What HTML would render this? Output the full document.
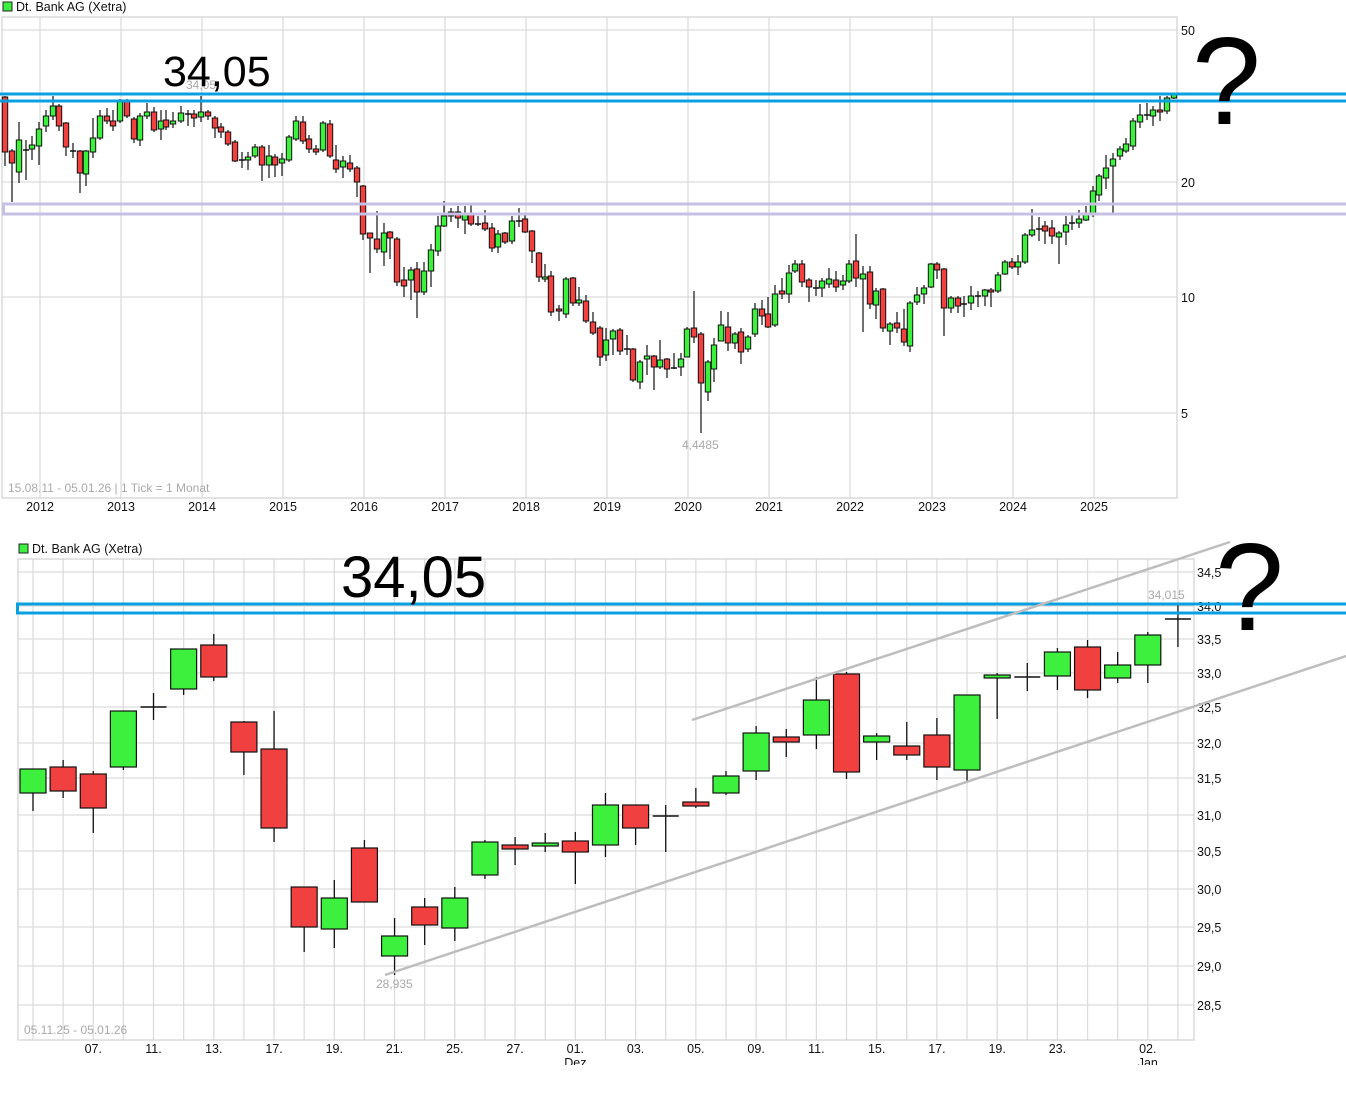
<!DOCTYPE html>
<html><head><meta charset="utf-8"><style>
html,body{margin:0;padding:0;background:#fff;width:1346px;height:1094px;overflow:hidden}
svg{position:absolute;left:0;top:0}
text{font-family:"Liberation Sans",sans-serif}
</style></head><body>
<svg id="s" width="1346" height="1094" xmlns="http://www.w3.org/2000/svg">
<defs><clipPath id="cb"><rect x="0" y="0" width="1346" height="1065"/></clipPath></defs>
<g id="grid"></g>
<g id="c1"></g>
<g id="c2"></g>
<g id="ov"></g>
</svg>
<script>
var NS="http://www.w3.org/2000/svg";
function el(p,t,a,txt){var e=document.createElementNS(NS,t);for(var k in a)e.setAttribute(k,a[k]);if(txt!=null)e.textContent=txt;document.getElementById(p).appendChild(e);return e;}
var G="#dcdcdc";
[30,182,297,413].forEach(function(y){el("grid","line",{x1:2,x2:1177,y1:y,y2:y,stroke:G,"stroke-width":1.3});});
var yrs=[40,121,202,283,364,445,526,607,688,769,850,932,1013,1094];
yrs.forEach(function(x,i){el("grid","line",{x1:x,x2:x,y1:17,y2:498,stroke:G,"stroke-width":1.3});
 el("grid","text",{x:x,y:511,"font-size":12.5,"text-anchor":"middle",fill:"#111"},String(2012+i));});
el("grid","rect",{x:2,y:17,width:1175,height:481,fill:"none",stroke:"#d4d4d4","stroke-width":1.3});
el("grid","text",{x:1181,y:35,"font-size":12.5,fill:"#111"},"50");
el("grid","text",{x:1181,y:187,"font-size":12.5,fill:"#111"},"20");
el("grid","text",{x:1181,y:302,"font-size":12.5,fill:"#111"},"10");
el("grid","text",{x:1181,y:418,"font-size":12.5,fill:"#111"},"5");
el("grid","rect",{x:3,y:2,width:9,height:9,fill:"#3ef03e",stroke:"#222","stroke-width":1});
el("grid","text",{x:16,y:11,"font-size":12.5,fill:"#111"},"Dt. Bank AG (Xetra)");
el("grid","text",{x:8,y:492,"font-size":12,fill:"#a9a9a9"},"15.08.11 - 05.01.26  | 1 Tick = 1 Monat");
el("grid","text",{x:682,y:449,"font-size":12,fill:"#a9a9a9"},"4,4485");
el("grid","text",{x:186,y:89,"font-size":12,fill:"#a9a9a9"},"34,05");
var T=[[5,97,152,0,96,166],[12,151,163,0,149,202],[19,140,172,1,122,183],[26,150,150,2,140,180],[32,145,149,1,136,160],[39,129,146,1,122,165],[46,116,126,1,110,132],[53,106,116,1,96,120],[59,106,126,0,104,131],[66,123,147,0,122,156],[73,151,151,2,143,158],[80,151,173,0,150,193],[86,151,174,1,150,186],[93,138,152,1,118,158],[100,116,138,1,110,140],[107,116,121,0,108,124],[113,121,126,0,110,131],[120,102,121,1,99,123],[127,102,116,0,99,118],[134,119,139,0,117,143],[140,116,140,1,113,146],[147,112,116,1,103,119],[154,112,130,0,107,132],[161,121,129,1,110,140],[166,120,127,0,110,130],[173,121,124,1,112,128],[181,113,121,1,106,123],[188,114,114,2,110,126],[194,114,118,0,110,127],[201,112,117,1,96,122],[208,112,116,0,110,120],[215,118,128,0,116,138],[221,127,132,0,123,138],[228,132,144,0,130,146],[235,142,161,0,140,162],[242,160,160,2,152,168],[248,157,160,1,152,170],[255,147,156,1,144,158],[262,147,165,0,145,181],[269,156,165,1,145,178],[275,157,165,0,154,177],[282,159,163,1,153,176],[289,137,160,1,135,162],[296,121,139,1,116,141],[303,122,141,0,116,144],[309,139,149,0,135,153],[316,149,152,0,145,155],[323,123,150,1,121,152],[330,124,156,0,120,158],[336,160,169,0,145,173],[343,161,167,1,156,178],[350,163,169,0,155,172],[357,168,182,0,166,197],
[363,186,234,0,185,240],[370,233,238,0,233,273],[377,239,249,0,211,253],[384,233,252,1,223,266],[390,232,238,0,231,259],[397,239,282,0,237,286],[404,280,286,0,267,297],[411,270,280,1,267,300],[417,269,292,0,262,318],[424,271,292,1,262,295],[431,250,271,1,244,287],[438,226,251,1,216,256],[444,216,226,1,201,227],[451,212,216,1,208,222],[458,212,218,0,206,228],[465,213,220,1,206,234],[471,213,224,0,205,226],[478,224,224,2,216,226],[485,223,229,0,210,231],[492,228,248,0,223,252],[498,234,247,1,230,253],[505,233,242,0,232,244],[512,221,241,1,216,244],[519,221,221,2,208,227],[525,219,232,0,214,233],[532,231,251,0,230,263],[539,253,277,0,252,282],[545,277,279,1,264,282],[551,276,312,0,271,316],[559,309,311,0,305,321],[566,279,314,1,277,318],[573,278,303,0,277,306],[579,300,303,1,287,306],[586,301,321,0,295,323],[593,322,333,0,312,335],[600,328,357,0,326,366],[606,340,355,1,328,361],[613,331,339,1,329,355],[620,330,351,0,328,355],[627,349,349,2,335,355],[633,349,380,0,348,382],[640,362,382,1,360,389],[647,356,359,1,345,375],[654,356,367,0,355,390],[660,360,367,1,340,369],[667,359,369,0,358,378],[674,368,368,2,353,369],[681,359,367,1,353,376],[687,329,357,1,327,357],[694,328,337,0,291,343],[701,334,383,0,332,433],[708,362,392,1,360,401],[714,345,369,1,338,382],[721,325,341,1,311,341],[728,327,343,0,312,351],[735,334,343,1,332,349],[741,332,352,0,328,364],[748,337,349,1,335,352],[755,309,334,1,303,337],[762,309,316,0,300,325],[768,314,327,0,297,328],[775,294,325,1,285,327],[782,291,294,0,278,299],[789,273,294,1,265,303],[795,264,271,1,260,273],[802,264,282,0,260,287],[809,280,287,0,278,302],[816,288,288,2,280,296],[822,281,288,1,278,297],[829,279,284,1,268,288],[836,280,287,0,271,292],[843,281,285,1,275,290],[849,264,281,1,260,283],[856,261,278,0,234,287],[863,274,279,1,266,332],[870,272,304,0,266,309],[876,291,305,1,288,319],[883,289,328,0,288,332],[890,324,331,1,322,345],[897,323,328,0,312,333],[904,329,342,0,309,346],[910,303,346,1,301,352],[917,295,302,1,287,305],[924,288,294,1,285,304],[931,264,287,1,263,288],[937,264,270,0,262,279],[944,269,308,0,268,336],[951,298,308,1,296,313],[958,298,306,0,296,313],[964,304,304,2,296,317],[971,296,303,1,286,310],[978,296,296,2,291,307],[985,290,296,1,289,306],[991,290,292,0,288,307],[998,275,291,1,272,293],[1005,262,274,1,260,275],[1012,262,267,0,258,269],[1018,262,267,1,255,275],[1025,235,262,1,233,264],[1032,230,235,1,209,237],[1039,229,229,2,217,241],[1045,226,231,0,221,244],[1052,228,236,0,220,244],[1059,233,237,1,231,264],[1066,225,232,1,216,245],[1072,223,223,2,214,230],[1079,219,223,1,210,228],[1086,214,220,1,206,221],[1093,191,213,1,186,217],[1099,176,195,1,174,201],[1106,168,178,1,155,189],[1113,159,166,1,153,213],[1120,149,156,1,146,160],[1126,144,151,1,138,153],[1133,121,146,1,118,150],[1140,115,122,1,104,128],[1147,115,115,2,103,120],[1153,110,116,1,106,126],[1160,110,112,0,96,121],[1167,98,111,1,96,114],[1174,95,98,1,94,99]];
T.forEach(function(c){
 el("c1","line",{x1:c[0],x2:c[0],y1:c[4],y2:c[5],stroke:"#111","stroke-width":1.2});
 if(c[3]==2){el("c1","line",{x1:c[0]-3,x2:c[0]+3,y1:c[1],y2:c[1],stroke:"#111","stroke-width":1.5});}
 else el("c1","rect",{x:c[0]-2.7,y:c[1],width:5.4,height:Math.max(2,c[2]-c[1]),fill:c[3]?"#3ef03e":"#f04040",stroke:"#111","stroke-width":1});
});
var L=18,R=1194,TOP=559,BOT=1040;
var lv=[["34,5",572],["34,0",606],["33,5",639],["33,0",673],["32,5",707],["32,0",743],["31,5",778],["31,0",815],["30,5",851],["30,0",889],["29,5",927],["29,0",966],["28,5",1005]];
lv.forEach(function(l){el("grid","line",{x1:L,x2:R,y1:l[1],y2:l[1],stroke:G,"stroke-width":1.3});
 el("grid","text",{x:1197,y:l[1]+5,"font-size":12.5,fill:"#111"},l[0]);});
var sp=30.13;
for(var k=0;k<39;k++){var x=33+k*sp;el("grid","line",{x1:x,x2:x,y1:TOP,y2:BOT,stroke:G,"stroke-width":1.3});}
el("grid","rect",{x:L,y:TOP,width:R-L,height:BOT-TOP,fill:"none",stroke:"#d4d4d4","stroke-width":1.3});
var xl=[["07.",2],["11.",4],["13.",6],["17.",8],["19.",10],["21.",12],["25.",14],["27.",16],["01.",18],["03.",20],["05.",22],["09.",24],["11.",26],["15.",28],["17.",30],["19.",32],["23.",34],["02.",37]];
var gl=document.createElementNS(NS,"g");gl.setAttribute("clip-path","url(#cb)");gl.id="xl";document.getElementById("s").appendChild(gl);
xl.forEach(function(a){el("xl","text",{x:33+a[1]*sp,y:1053,"font-size":12.5,"text-anchor":"middle",fill:"#111"},a[0]);});
el("xl","text",{x:33+18*sp,y:1067,"font-size":12.5,"text-anchor":"middle",fill:"#111"},"Dez");
el("xl","text",{x:33+37*sp,y:1067,"font-size":12.5,"text-anchor":"middle",fill:"#111"},"Jan");
el("grid","rect",{x:19,y:544,width:9,height:9,fill:"#3ef03e",stroke:"#222","stroke-width":1});
el("grid","text",{x:32,y:553,"font-size":12.5,fill:"#111"},"Dt. Bank AG (Xetra)");
el("grid","text",{x:24,y:1034,"font-size":12,fill:"#a9a9a9"},"05.11.25 - 05.01.26");
el("grid","text",{x:376,y:988,"font-size":12,fill:"#a9a9a9"},"28,935");
el("grid","text",{x:1148,y:599,"font-size":12,fill:"#a9a9a9"},"34,015");
var B=[[769,793,1,769,811],[767,791,0,760,798],[774,808,0,771,833],[711,767,1,711,770],[707,707,2,693,720],[649,689,1,649,695],[645,677,0,634,681],[722,752,0,721,775],[749,828,0,711,842],[887,927,0,887,952],[898,929,1,880,948],[848,902,0,840,902],[936,956,1,918,975],[907,925,0,898,945],[898,928,1,887,941],[842,875,1,840,879],[845,849,0,837,865],[843,846,1,833,852],[841,852,0,832,884],[805,845,1,793,857],[805,828,0,805,845],[816,816,2,805,852],[802,806,0,788,808],[776,793,1,771,795],[733,771,1,726,780],[737,742,0,729,757],[700,735,1,677,749],[674,772,0,672,779],[736,742,1,733,760],[746,755,0,722,760],[735,767,0,718,780],[695,770,1,695,783],[675,678,1,673,719],[677,677,2,663,691],[652,676,1,648,690],[647,690,0,640,698],[665,678,1,652,683],[635,665,1,632,683],[619,619,2,604,647]];
B.forEach(function(c,k){var x=33+k*sp;
 el("c2","line",{x1:x,x2:x,y1:c[3],y2:c[4],stroke:"#111","stroke-width":1.3});
 if(c[2]==2) el("c2","line",{x1:x-13,x2:x+13,y1:c[0],y2:c[0],stroke:"#111","stroke-width":1.5});
 else el("c2","rect",{x:x-13,y:c[0],width:26,height:Math.max(2,c[1]-c[0]),fill:c[2]?"#3ef03e":"#f04040",stroke:"#111","stroke-width":1.2});
});
var BL="#0aa0e0",LV="#c6c0e4";
el("ov","line",{x1:0,x2:1346,y1:94,y2:94,stroke:BL,"stroke-width":3});
el("ov","line",{x1:0,x2:1346,y1:101,y2:101,stroke:BL,"stroke-width":3});
el("ov","path",{d:"M1346 204 H3.5 V214 H1346",fill:"none",stroke:LV,"stroke-width":3});
el("ov","path",{d:"M1346 604 H17.5 V613 H1346",fill:"none",stroke:BL,"stroke-width":3});
el("ov","line",{x1:692,y1:720,x2:1230,y2:542,stroke:"#bdbdbd","stroke-width":2.5});
el("ov","line",{x1:385,y1:975,x2:1346,y2:656,stroke:"#bdbdbd","stroke-width":2.5});
el("ov","text",{x:163,y:86,"font-size":43,fill:"#000"},"34,05");
el("ov","text",{x:341,y:597,"font-size":58,fill:"#000"},"34,05");
el("ov","text",{x:1192,y:124,"font-size":124,fill:"#000"},"?");
el("ov","text",{x:1215,y:630,"font-size":124,fill:"#000"},"?");
</script>
</body></html>
